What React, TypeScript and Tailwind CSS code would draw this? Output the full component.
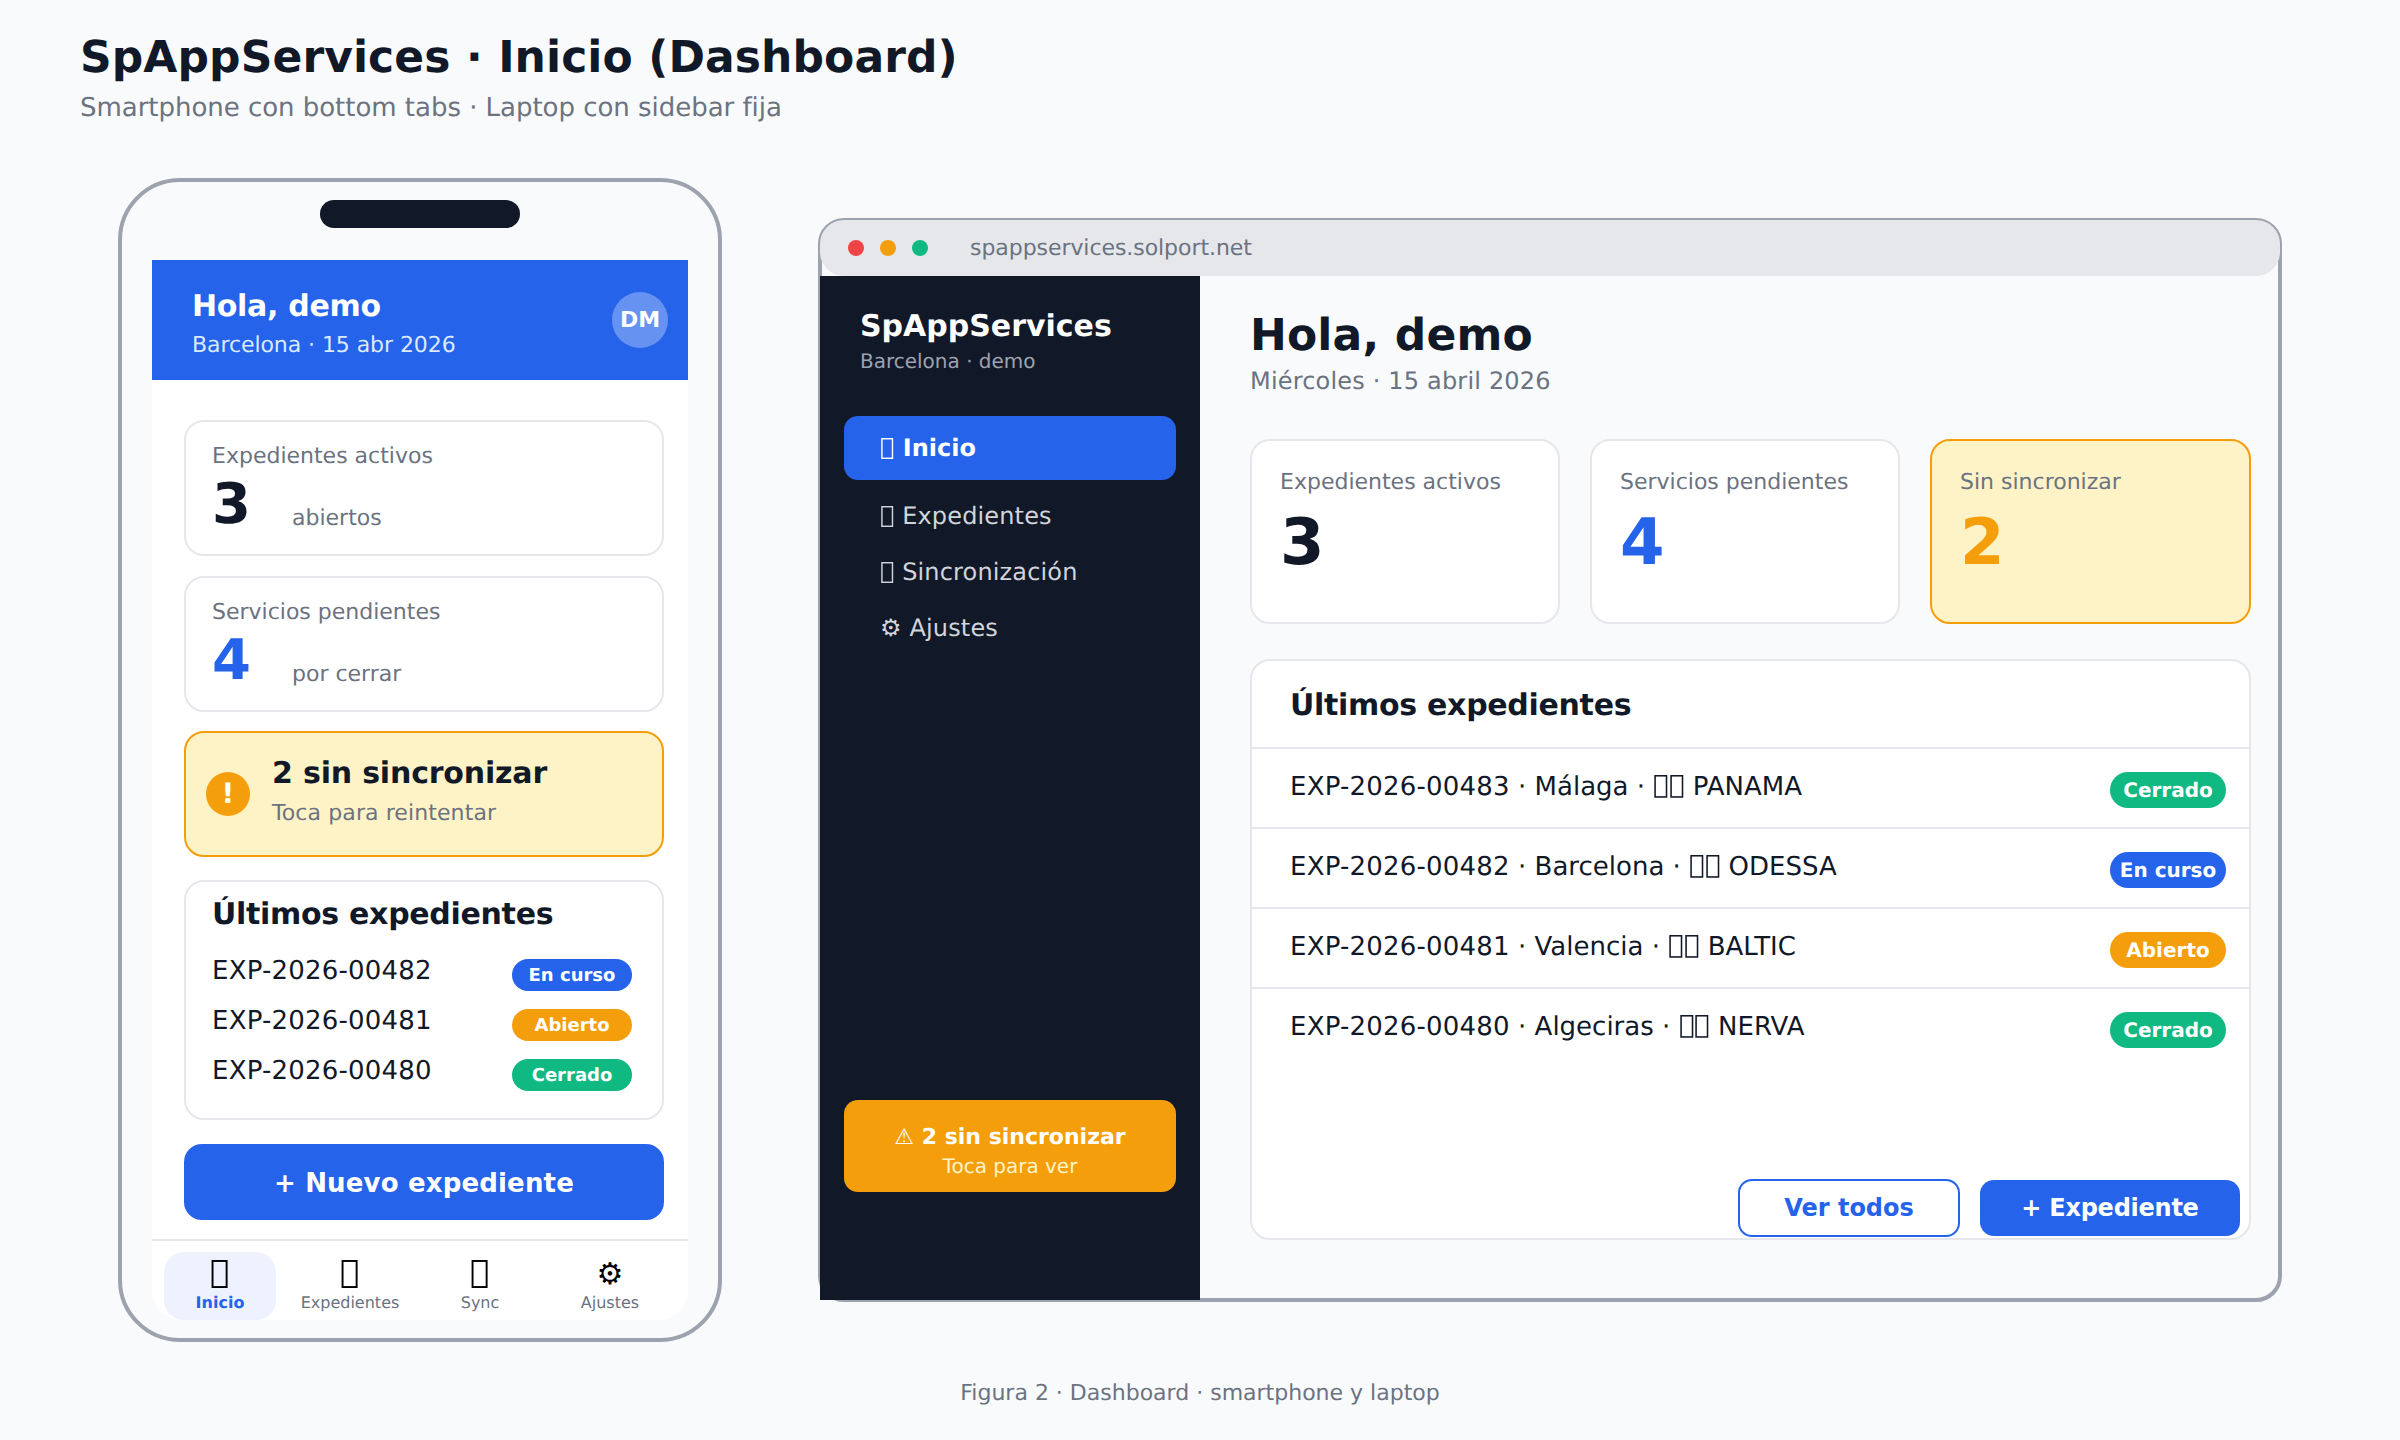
const sans = "font-['DejaVu_Sans',sans-serif] [text-rendering:geometricPrecision]"

// emoji in the picture have no glyph, so they show as the font's empty box
function Tofu({ className = "" }: { className?: string }) {
	return (
		<svg className={`inline-block h-[.875em] w-[.6em] align-[-.125em] ${className}`} viewBox="0 0 600 875">
			<rect x="80" y="30" width="440" height="815" fill="none" stroke="currentColor" strokeWidth="60" />
		</svg>
	)
}

const badgeColors = {
	"En curso": "bg-[#2563eb]",
	Abierto: "bg-[#f59e0b]",
	Cerrado: "bg-[#10b981]",
}

type Status = keyof typeof badgeColors

function Badge({ status, big }: { status: Status; big?: boolean }) {
	return (
		<span
			className={`flex items-center justify-center rounded-full font-bold text-white ${badgeColors[status]} ${
				big ? "mt-[4px] h-[36px] w-[116px] text-[20px]" : "mt-[8px] h-[32px] w-[120px] text-[18px]"
			}`}
		>
			{status}
		</span>
	)
}

function PhoneStat({
	label,
	value,
	note,
	color,
}: {
	label: string
	value: string
	note: string
	color: string
}) {
	return (
		<div className="h-[136px] rounded-[20px] border-2 border-[#e5e7eb] bg-white pl-[26px] pt-[19px]">
			<p className="text-[22px] leading-[32px] text-[#6b7280]">{label}</p>
			<div className="mt-[2px] flex items-end">
				<span className={`w-[80px] text-[56px] font-bold leading-[60px] ${color}`}>{value}</span>
				<span className="text-[22px] leading-[32px] text-[#6b7280]">{note}</span>
			</div>
		</div>
	)
}

function Phone() {
	const recent: [string, Status][] = [
		["EXP-2026-00482", "En curso"],
		["EXP-2026-00481", "Abierto"],
		["EXP-2026-00480", "Cerrado"],
	]
	const tabs = ["Inicio", "Expedientes", "Sync", "Ajustes"]
	return (
		<div className="flex h-[1164px] w-[604px] shrink-0 flex-col items-center rounded-[62px] border-4 border-[#9ca3af] pt-[18px]">
			<div className="h-[28px] w-[200px] shrink-0 rounded-[14px] bg-[#111827]" />
			<div className="mt-[32px] flex h-[1060px] w-[536px] flex-col rounded-b-[30px] bg-white">
				<header className="flex h-[120px] shrink-0 justify-between bg-[#2563eb] pl-[40px] pr-[20px] pt-[27px]">
					<div>
						<h2 className="text-[30px] font-bold leading-[40px] tracking-[-0.3px] text-white">Hola, demo</h2>
						<p className="mt-[3px] text-[22px] leading-[32px] tracking-[-0.07px] text-[#dbeafe]">
							Barcelona · 15 abr 2026
						</p>
					</div>
					<div className="mt-[5px] flex size-[56px] items-center justify-center rounded-full bg-white/30 text-[22px] font-bold text-white">
						DM
					</div>
				</header>
				<div className="flex flex-col pl-[32px] pr-[24px] pt-[40px]">
					<PhoneStat label="Expedientes activos" value="3" note="abiertos" color="text-[#111827]" />
					<div className="mt-[20px]">
						<PhoneStat label="Servicios pendientes" value="4" note="por cerrar" color="text-[#2563eb]" />
					</div>
					<div className="mt-[19px] flex h-[126px] items-center rounded-[20px] border-2 border-[#f59e0b] bg-[#fef3c7] pl-[20px]">
						<div className="flex size-[44px] items-center justify-center rounded-full bg-[#f59e0b] text-[28px] font-bold text-white">
							!
						</div>
						<div className="ml-[22px] self-start pt-[21px]">
							<p className="text-[30px] font-bold leading-[40px] tracking-[-0.18px] text-[#111827]">2 sin sincronizar</p>
							<p className="mt-[4px] text-[22px] leading-[32px] tracking-[0.1px] text-[#6b7280]">Toca para reintentar</p>
						</div>
					</div>
					<div className="mt-[23px] h-[240px] rounded-[20px] border-2 border-[#e5e7eb] bg-white pl-[26px] pr-[30px] pt-[13px]">
						<h3 className="text-[30px] font-bold leading-[40px] tracking-[-0.3px] text-[#111827]">Últimos expedientes</h3>
						<ul className="mt-[11px]">
							{recent.map(([code, status]) => (
								<li key={code} className="flex h-[50px] items-center justify-between">
									<span className="text-[26px] tracking-[0.2px] text-[#111827]">{code}</span>
									<Badge status={status} />
								</li>
							))}
						</ul>
					</div>
					<button className="mt-[24px] h-[76px] rounded-[18px] bg-[#2563eb] pt-[2px] text-[26px] font-bold tracking-[0.17px] text-white">
						+ Nuevo expediente
					</button>
				</div>
				<nav className="mt-auto flex h-[81px] border-t-2 border-[#e5e7eb] pl-[12px] pt-[11px]">
					{tabs.map((label, i) => (
						<div
							key={label}
							className={`flex h-[68px] flex-col items-center rounded-[20px] pt-[4px] ${
								i === 0 ? "mr-[9px] w-[112px] bg-[#eef2ff]" : "w-[130px]"
							}`}
						>
							<span className="h-[36px] pt-[1px] text-[30px] leading-[36px] text-black">
								{label === "Ajustes" ? "⚙" : <Tofu className="text-[32px]" />}
							</span>
							<span className={`text-[16px] leading-[22px] ${i === 0 ? "font-bold text-[#2563eb]" : "text-[#6b7280]"}`}>
								{label}
							</span>
						</div>
					))}
				</nav>
			</div>
		</div>
	)
}

function Kpi({
	label,
	value,
	width,
	color,
	warn,
}: {
	label: string
	value: string
	width: string
	color: string
	warn?: boolean
}) {
	return (
		<div
			className={`h-[185px] rounded-[20px] border-2 pl-[28px] pt-[26px] ${width} ${
				warn ? "border-[#f59e0b] bg-[#fef3c7]" : "border-[#e5e7eb] bg-white"
			}`}
		>
			<p className="text-[22px] leading-[32px] text-[#6b7280]">{label}</p>
			<p className={`mt-[4px] text-[64px] font-bold leading-[80px] ${color}`}>{value}</p>
		</div>
	)
}

function Laptop() {
	const nav = ["Inicio", "Expedientes", "Sincronización", "Ajustes"]
	const rows: [string, string, string, Status][] = [
		["EXP-2026-00483", "Málaga", "PANAMA", "Cerrado"],
		["EXP-2026-00482", "Barcelona", "ODESSA", "En curso"],
		["EXP-2026-00481", "Valencia", "BALTIC", "Abierto"],
		["EXP-2026-00480", "Algeciras", "NERVA", "Cerrado"],
	]
	return (
		<div className="ml-[96px] mt-[40px] h-[1084px] w-[1464px] shrink-0 rounded-[26px] border-4 border-[#9ca3af]">
			<div className="-mx-[2px] -mt-[2px] flex h-[56px] items-center rounded-[24px] bg-[#e5e7eb] pl-[28px]">
				<span className="size-[16px] rounded-full bg-[#ef4444]" />
				<span className="ml-[16px] size-[16px] rounded-full bg-[#f59e0b]" />
				<span className="ml-[16px] size-[16px] rounded-full bg-[#10b981]" />
				<span className="ml-[42px] text-[22px] tracking-[-0.06px] text-[#6b7280]">spappservices.solport.net</span>
			</div>
			<div className="-ml-[2px] flex h-[1024px]">
				<aside className="flex h-[1024px] w-[380px] shrink-0 flex-col bg-[#111827] px-[24px] pb-[108px]">
					<div className="pl-[16px] pt-[31px]">
						<h2 className="text-[30px] font-bold leading-[40px] text-white">SpAppServices</h2>
						<p className="text-[20px] leading-[29px] text-[#9ca3af]">Barcelona · demo</p>
					</div>
					<nav className="mt-[40px]">
						{nav.map((label, i) => (
							<div
								key={label}
								className={`flex items-center pl-[36px] text-[24px] ${
									i === 0
										? "mb-[7px] h-[64px] rounded-[14px] bg-[#2563eb] font-bold text-white"
										: "h-[56px] pt-[2px] tracking-[0.15px] text-[#d1d5db]"
								}`}
							>
								<span>
									{label === "Ajustes" ? "⚙" : <Tofu />} {label}
								</span>
							</div>
						))}
					</nav>
					<div className="mt-auto flex h-[92px] flex-col items-center rounded-[14px] bg-[#f59e0b] pt-[22px] text-white">
						<p className="text-[22px] font-bold leading-[32px]">⚠ 2 sin sincronizar</p>
						<p className="text-[20px] leading-[24px] text-[#fef3c7]">Toca para ver</p>
					</div>
				</aside>
				<main className="flex-1 pl-[50px] pr-[27px]">
					<h1 className="pt-[31px] text-[44px] font-bold leading-[57px] tracking-[0.15px] text-[#111827]">Hola, demo</h1>
					<p className="text-[24px] leading-[34px] tracking-[0.18px] text-[#6b7280]">Miércoles · 15 abril 2026</p>
					<div className="mt-[41px] flex gap-[30px]">
						<Kpi label="Expedientes activos" value="3" width="w-[310px]" color="text-[#111827]" />
						<Kpi label="Servicios pendientes" value="4" width="w-[310px]" color="text-[#2563eb]" />
						<Kpi label="Sin sincronizar" value="2" width="w-[321px]" color="text-[#f59e0b]" warn />
					</div>
					<section className="mt-[35px] flex h-[581px] flex-col rounded-[20px] border-2 border-[#e5e7eb] bg-white">
						<h3 className="flex h-[86px] shrink-0 items-center pl-[38px] pt-[2px] text-[30px] font-bold tracking-[-0.3px] text-[#111827]">
							Últimos expedientes
						</h3>
						{rows.map(([code, place, ship, status]) => (
							<div
								key={code}
								className="flex h-[80px] shrink-0 items-center justify-between border-t-2 border-[#e5e7eb] pl-[38px] pr-[23px]"
							>
								<span className="mb-[2px] text-[26px] text-[#111827]">
									<span className="tracking-[0.2px]">{code}</span> · {place} · <Tofu />
									<Tofu /> {ship}
								</span>
								<Badge status={status} big />
							</div>
						))}
						<div className="mt-auto flex justify-end gap-[20px] pb-[1px] pr-[9px]">
							<button className="h-[58px] w-[222px] rounded-[14px] border-2 border-[#2563eb] bg-white text-[24px] font-bold text-[#2563eb]">
								Ver todos
							</button>
							<button className="h-[56px] w-[260px] self-center rounded-[14px] bg-[#2563eb] text-[24px] font-bold tracking-[-0.25px] text-white">
								+ Expediente
							</button>
						</div>
					</section>
				</main>
			</div>
		</div>
	)
}

export default function App() {
	return (
		<div className={`flex h-[1440px] w-[2400px] flex-col bg-[#f9fafb] ${sans}`}>
			<div className="pl-[80px] pt-[28px]">
				<h1 className="text-[44px] font-bold leading-[60px] tracking-[0.09px] text-[#111827]">
					SpAppServices · Inicio (Dashboard)
				</h1>
				<p className="text-[26px] leading-[40px] tracking-[-0.03px] text-[#6b7280]">
					Smartphone con bottom tabs · Laptop con sidebar fija
				</p>
			</div>
			<div className="mt-[50px] flex items-start pl-[118px]">
				<Phone />
				<Laptop />
			</div>
			<p className="mt-[35px] text-center text-[22px] text-[#6b7280]">Figura 2 · Dashboard · smartphone y laptop</p>
		</div>
	)
}
